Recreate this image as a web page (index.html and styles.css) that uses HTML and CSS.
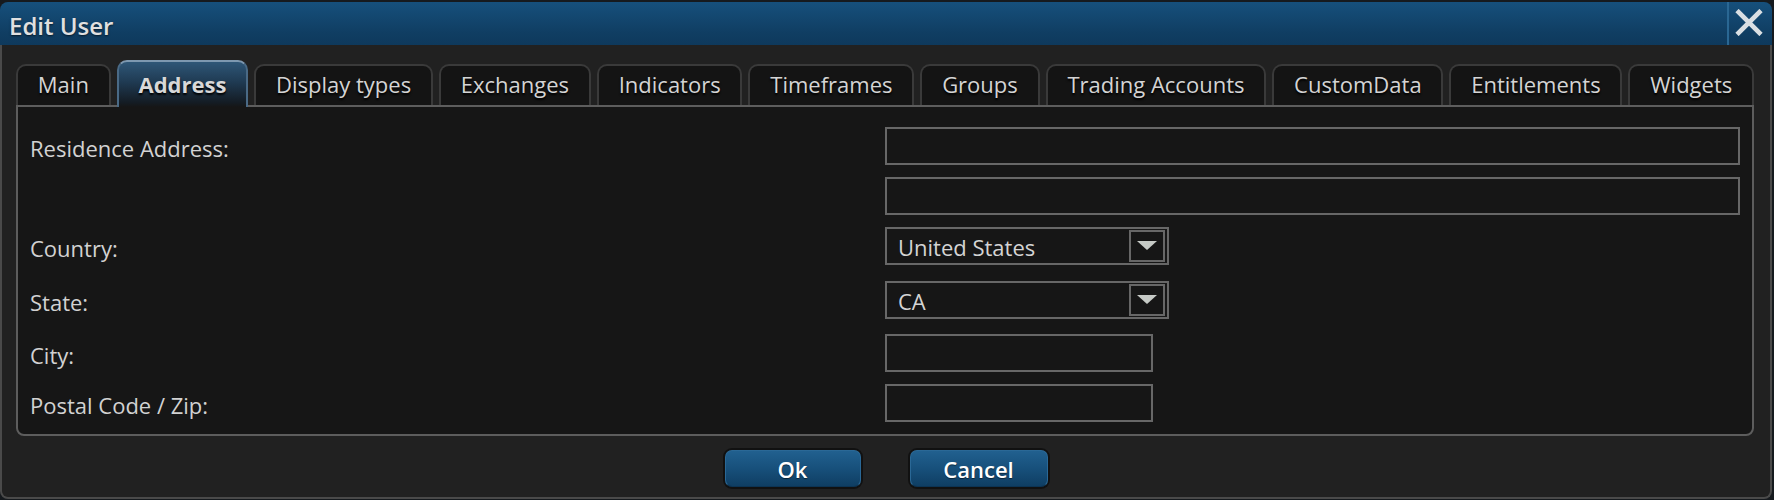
FILE: index.html
```html
<!DOCTYPE html>
<html lang="en">
<head>
<meta charset="utf-8">
<title>Edit User</title>
<link rel="stylesheet" href="styles.css">
</head>
<body>
<div class="dialog">
  <div class="titlebar">
    <div class="title">Edit User</div>
    <div class="close">
      <svg width="28" height="27" viewBox="0 0 28 27"><path d="M2 1.5 L26 25.5 M26 1.5 L2 25.5" stroke="#dadfe3" stroke-width="4.6" fill="none"/></svg>
    </div>
  </div>
  <div class="content">
    <div class="tabs">
      <div class="tab">Main</div>
      <div class="tab active">Address</div>
      <div class="tab">Display types</div>
      <div class="tab">Exchanges</div>
      <div class="tab">Indicators</div>
      <div class="tab">Timeframes</div>
      <div class="tab">Groups</div>
      <div class="tab">Trading Accounts</div>
      <div class="tab">CustomData</div>
      <div class="tab">Entitlements</div>
      <div class="tab">Widgets</div>
    </div>
    <div class="panel">
      <div class="form">
        <div class="label top">Residence Address:</div>
        <div class="field stack">
          <div class="input wide"></div>
          <div class="input wide"></div>
        </div>

        <div class="label">Country:</div>
        <div class="field">
          <div class="select"><span class="value">United States</span><span class="drop"><svg width="20" height="9" viewBox="0 0 20 9"><path d="M0 0 H20 L10 9 Z" fill="#c6cac6"/></svg></span></div>
        </div>

        <div class="label spaced">State:</div>
        <div class="field spaced">
          <div class="select"><span class="value">CA</span><span class="drop"><svg width="20" height="9" viewBox="0 0 20 9"><path d="M0 0 H20 L10 9 Z" fill="#c6cac6"/></svg></span></div>
        </div>

        <div class="label">City:</div>
        <div class="field"><div class="input short"></div></div>

        <div class="label">Postal Code / Zip:</div>
        <div class="field"><div class="input short"></div></div>
      </div>
    </div>
    <div class="actions">
      <button class="btn ok">Ok</button>
      <button class="btn cancel">Cancel</button>
    </div>
  </div>
</div>
</body>
</html>
```

FILE: styles.css
```css
* { box-sizing: border-box; }

html, body {
  margin: 0;
  padding: 0;
}

body {
  width: 1774px;
  height: 500px;
  overflow: hidden;
  background: #161a1e;
  font-family: "Open Sans", "Noto Sans", "DejaVu Sans", sans-serif;
  color: #d2d2d2;
}

.dialog {
  margin-top: 2px;
  width: 1772px;
  height: 497px;
  display: flex;
  flex-direction: column;
}

.titlebar {
  height: 43px;
  flex: none;
  display: flex;
  align-items: stretch;
  background: linear-gradient(#16507c, #103e63 70%, #0e395c);
  border-radius: 8px 8px 0 0;
}

.title {
  flex: 1;
  display: flex;
  align-items: center;
  padding: 4px 0 0 9px;
  font-size: 24px;
  font-weight: 600;
  color: #e0e0e0;
  text-shadow: 0 1px 2px rgba(0, 0, 0, 0.6);
}

.close {
  width: 45px;
  border-left: 2px solid #2a6793;
  display: flex;
  align-items: center;
  justify-content: center;
  padding: 0 4px 3px 0;
}

.content {
  flex: 1;
  display: flex;
  flex-direction: column;
  background: #212121;
  border: 2px solid #4a4a4a;
  border-top: none;
  border-radius: 0 0 8px 8px;
  padding: 15px 16px 0 14px;
}

.tabs {
  height: 45px;
  flex: none;
  display: flex;
  align-items: flex-end;
  gap: 6px;
}

.tab {
  flex: 1 1 auto;
  height: 41px;
  line-height: 37px;
  padding: 0 17px;
  text-align: center;
  font-size: 22px;
  white-space: nowrap;
  color: #d4d4d4;
  background: #141414;
  border: 2px solid #3a3a3a;
  border-bottom: none;
  border-radius: 10px 10px 0 0;
  text-shadow: 0 2px 2px #000;
}

.tab.active {
  position: relative;
  z-index: 1;
  height: 47px;
  margin-bottom: -2px;
  padding-top: 4px;
  font-weight: 700;
  color: #d8d8d8;
  background: linear-gradient(#2e5677, #1f3a52 45%, #141c24 90%, #161616);
  border-color: #4a6a86;
  border-top-color: #7d98b0;
}

.panel {
  flex: none;
  background: #161616;
  border: 2px solid #5d5d5d;
  border-radius: 0 0 8px 8px;
  padding: 20px 12px 12px;
}

.form {
  display: grid;
  grid-template-columns: 1fr 1fr;
  row-gap: 12px;
}

.label {
  height: 38px;
  display: flex;
  align-items: center;
  padding-top: 3px;
  font-size: 22px;
  color: #d2d2d2;
  align-self: center;
}

.label.top {
  align-self: start;
}

.spaced {
  margin: 4px 0 3px;
}

.field.stack {
  display: flex;
  flex-direction: column;
  gap: 12px;
}

.input {
  height: 38px;
  border: 2px solid #676767;
  background: #161616;
}

.input.short {
  width: 268px;
}

.select {
  width: 284px;
  height: 38px;
  border: 2px solid #676767;
  display: flex;
  align-items: center;
  justify-content: space-between;
  padding: 0 2px 0 11px;
}

.value {
  font-size: 22px;
  color: #d4d4d4;
  padding-top: 2px;
}

.drop {
  width: 36px;
  height: 32px;
  border: 2px solid #676767;
  display: flex;
  align-items: center;
  justify-content: center;
  padding-bottom: 2px;
}

.actions {
  display: flex;
  justify-content: center;
  gap: 49px;
  padding: 14px 0 0 2px;
}

.btn {
  height: 37px;
  font-family: inherit;
  font-size: 22px;
  font-weight: 600;
  color: #ffffff;
  line-height: 1;
  padding: 0;
  padding-top: 1px;
  background: linear-gradient(#21608f, #17507b 50%, #0f3e63);
  border: 1px solid #2a6896;
  border-bottom-color: #0c3454;
  border-radius: 7px;
  box-shadow: 0 0 0 2px #111111;
  text-shadow: 0 1px 1px rgba(0, 0, 0, 0.5);
}

.btn.ok { width: 136px; }
.btn.cancel { width: 138px; }
```
